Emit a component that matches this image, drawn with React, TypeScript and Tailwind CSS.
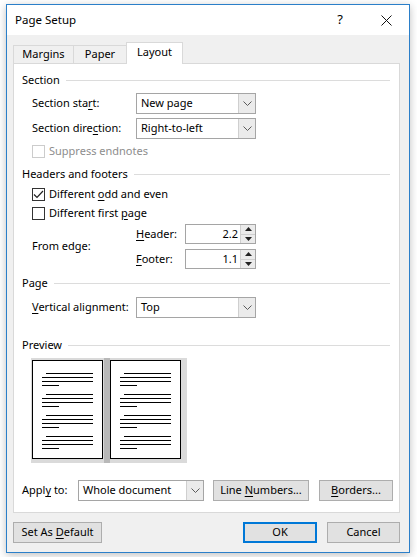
import React from 'react';

const font = { fontFamily: '"Noto Sans", "Segoe UI", sans-serif' };

const Chevron = () => (
  <svg width="9" height="5" viewBox="0 0 9 5" className="block">
    <path d="M0.5 0.5 L4.5 4.5 L8.5 0.5" fill="none" stroke="#5a5a5a" strokeWidth="1" />
  </svg>
);

const Select = ({ value, width }: { value: string; width: string }) => (
  <div className={`flex h-[21px] ${width} border border-[#a5a5a5] bg-white`}>
    <div className="flex flex-1 items-center pl-[4px] text-black">{value}</div>
    <div className="flex w-[17px] items-center justify-center border-l border-[#cfcfcf] bg-[#ebebeb]">
      <Chevron />
    </div>
  </div>
);

const Spinner = ({ value }: { value: string }) => (
  <div className="flex h-[20px] w-[71px] border border-[#a5a5a5] bg-white">
    <div className="flex flex-1 items-center justify-end pr-[2px]">{value}</div>
    <div className="flex w-[15px] flex-col border-l border-[#cfcfcf] bg-[#ebebeb]">
      <div className="flex flex-1 items-center justify-center border-b border-[#cfcfcf]">
        <svg width="7" height="4" viewBox="0 0 7 4">
          <path d="M0 4 L3.5 0 L7 4 Z" fill="#222" />
        </svg>
      </div>
      <div className="flex flex-1 items-center justify-center">
        <svg width="7" height="4" viewBox="0 0 7 4">
          <path d="M0 0 L3.5 4 L7 0 Z" fill="#222" />
        </svg>
      </div>
    </div>
  </div>
);

const Checkbox = ({ checked, disabled }: { checked?: boolean; disabled?: boolean }) => (
  <div
    className={`flex h-[13px] w-[13px] items-center justify-center border bg-white ${
      disabled ? 'border-[#cccccc]' : 'border-[#333333]'
    }`}
  >
    {checked && (
      <svg width="11" height="9" viewBox="0 0 11 9">
        <path d="M1 4.5 L4 7.5 L10 1" fill="none" stroke="#222" strokeWidth="1.2" />
      </svg>
    )}
  </div>
);

const Heading = ({ children, className = '' }: { children: React.ReactNode; className?: string }) => (
  <div className={`flex h-4 items-center gap-[6px] pr-[9px] ${className}`}>
    <span>{children}</span>
    <div className="h-px flex-1 bg-[#dcdcdc]" />
  </div>
);

const Button = ({ children, width, primary }: { children: React.ReactNode; width: string; primary?: boolean }) => (
  <div
    className={`flex h-[21px] ${width} items-center justify-center bg-[#e1e1e1] ${
      primary ? 'border-2 border-[#0078d7]' : 'border border-[#adadad]'
    }`}
  >
    {children}
  </div>
);

const PreviewPage = () => {
  const group = [0, 1, 2, 3];
  return (
    <div className="flex h-[99px] w-[71px] flex-col border-[1.5px] border-black bg-white pt-[12px]">
      {group.map((g) => (
        <div key={g} className="mb-[8px] flex flex-col gap-[3px]">
          <div className="ml-[12.5px] h-px w-[47px] bg-black" />
          <div className="ml-[8.5px] h-px w-[51px] bg-black" />
          <div className="ml-[8.5px] h-px w-[51px] bg-black" />
          <div className="ml-[8.5px] h-px w-[17px] bg-black" />
        </div>
      ))}
    </div>
  );
};

const U = ({ children }: { children: React.ReactNode }) => <span className="underline underline-offset-2">{children}</span>;

export default function App() {
  return (
    <div className="min-h-[557px] w-[417px] whitespace-nowrap bg-white pl-[6px] pt-[4px] text-[11px] text-black" style={font}>
      <div className="flex w-[404px] flex-col border border-[#2b7fc9] bg-[#f0f0f0] shadow-[0_2px_8px_rgba(0,0,0,0.25)]">
        {/* title bar */}
        <div className="flex h-[30px] items-center bg-white pl-[8px]">
          <span className="flex-1 text-[11.5px]">Page Setup</span>
          <span className="w-[46px] text-center text-[13px]">?</span>
          <div className="flex w-[46px] items-center justify-center">
            <svg width="11" height="11" viewBox="0 0 11 11">
              <path d="M0.5 0.5 L10.5 10.5 M10.5 0.5 L0.5 10.5" stroke="#111" strokeWidth="1" />
            </svg>
          </div>
        </div>

        <div className="flex flex-col pl-[6px] pr-[9px] pt-[7px]">
          {/* tabs */}
          <div className="flex items-end">
            <div className="-mr-px flex h-[18px] w-[61px] items-center justify-center border border-b-0 border-[#d9d9d9] bg-[#f0f0f0]">
              Margins
            </div>
            <div className="-mr-px flex h-[18px] w-[54px] items-center justify-center border border-b-0 border-[#d9d9d9] bg-[#f0f0f0]">
              Paper
            </div>
            <div className="relative -mb-px flex h-[22px] w-[57px] items-center justify-center border border-b-0 border-[#d9d9d9] bg-white pb-[2px]">
              Layout
            </div>
          </div>

          {/* panel */}
          <div className="flex flex-col border border-[#d9d9d9] bg-white pb-[11px] pl-[8px] pt-[8px]">
            <Heading>Section</Heading>
            <div className="mt-[5px] flex items-center pl-[10px]">
              <span className="w-[104px]">
                Section sta<U>r</U>t:
              </span>
              <Select value="New page" width="w-[120px]" />
            </div>
            <div className="mt-[4px] flex items-center pl-[10px]">
              <span className="w-[104px]">
                Section dire<U>c</U>tion:
              </span>
              <Select value="Right-to-left" width="w-[120px]" />
            </div>
            <div className="mt-[4px] flex h-4 items-center gap-[4px] pl-[10px] text-[#8d8d8d]">
              <Checkbox disabled />
              <span>Suppress endnotes</span>
            </div>

            <Heading className="mt-[7px]">Headers and footers</Heading>
            <div className="mt-[4px] flex h-4 items-center gap-[4px] pl-[10px]">
              <Checkbox checked />
              <span>
                Different <U>o</U>dd and even
              </span>
            </div>
            <div className="mt-[3px] flex h-4 items-center gap-[4px] pl-[10px]">
              <Checkbox />
              <span>
                Different first <U>p</U>age
              </span>
            </div>
            <div className="mt-[3px] flex items-center pl-[10px]">
              <span className="w-[104px]">From edge:</span>
              <div className="flex flex-col gap-[5px]">
                <div className="flex items-center">
                  <span className="w-[49px]">
                    <U>H</U>eader:
                  </span>
                  <Spinner value="2.2" />
                </div>
                <div className="flex items-center">
                  <span className="w-[49px]">
                    <U>F</U>ooter:
                  </span>
                  <Spinner value="1.1" />
                </div>
              </div>
            </div>

            <Heading className="mt-[6px]">Page</Heading>
            <div className="mt-[6px] flex items-center pl-[10px]">
              <span className="w-[104px]">
                <U>V</U>ertical alignment:
              </span>
              <Select value="Top" width="w-[120px]" />
            </div>

            <Heading className="mt-[19px]">Preview</Heading>
            <div className="mt-[5px] ml-[9px] flex h-[105px] w-[156px] bg-[#dadada] pl-[1px] pt-[2px]">
              <PreviewPage />
              <div className="mx-[0.5px] w-[6px] self-stretch -mt-[2px] bg-[#b8b8b8]" />
              <PreviewPage />
            </div>

            <div className="mt-[17px] flex items-center">
              <span className="w-[56px]">
                Appl<U>y</U> to:
              </span>
              <Select value="Whole document" width="w-[126px]" />
              <div className="ml-[9px]">
                <Button width="w-[96px]">
                  <span>
                    Line <U>N</U>umbers...
                  </span>
                </Button>
              </div>
              <div className="ml-[10px]">
                <Button width="w-[74px]">
                  <span>
                    <U>B</U>orders...
                  </span>
                </Button>
              </div>
            </div>
          </div>

          {/* bottom buttons */}
          <div className="mb-[9px] mt-[9px] flex items-center">
            <Button width="w-[89px]">
              <span>
                Set As <U>D</U>efault
              </span>
            </Button>
            <div className="flex-1" />
            <Button width="w-[74px]" primary>
              OK
            </Button>
            <div className="ml-[10px]">
              <Button width="w-[73px]">Cancel</Button>
            </div>
          </div>
        </div>
      </div>
    </div>
  );
}
